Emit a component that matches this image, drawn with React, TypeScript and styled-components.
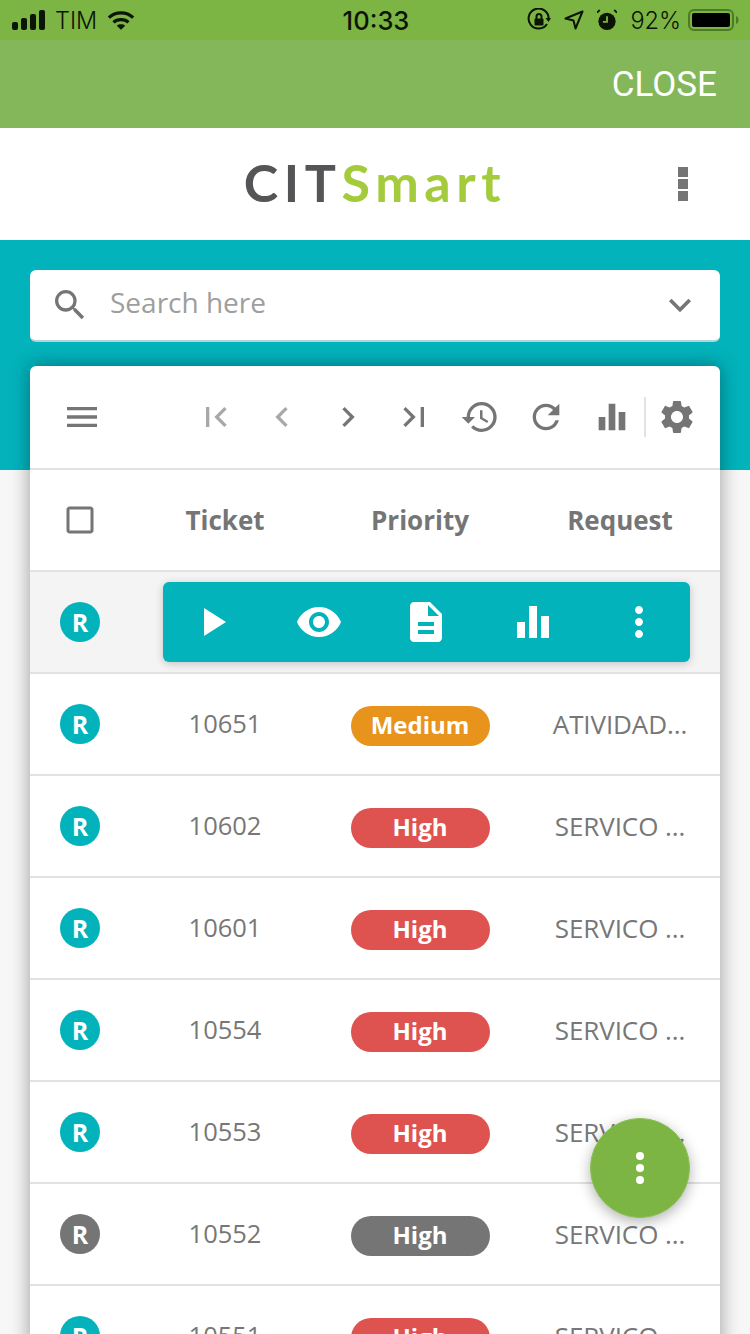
import styled, { createGlobalStyle } from "styled-components";
import {
  MdCheckBoxOutlineBlank,
  MdChevronLeft,
  MdChevronRight,
  MdDescription,
  MdEqualizer,
  MdExpandMore,
  MdFirstPage,
  MdHistory,
  MdLastPage,
  MdMenu,
  MdMoreVert,
  MdPlayArrow,
  MdRefresh,
  MdRemoveRedEye,
  MdSearch,
  MdSettings,
} from "react-icons/md";

const GlobalStyle = createGlobalStyle`
  html, body {
    margin: 0;
    padding: 0;
    background: #f7f7f7;
    overflow: hidden;
  }
  * { box-sizing: border-box; }
`;

const Page = styled.div`
  position: relative;
  width: 750px;
  height: 1334px;
  overflow: hidden;
  font-family: "Open Sans", sans-serif;
`;

const StatusBar = styled.div`
  height: 40px;
  background: #7cb544;
  display: grid;
  grid-template-columns: 1fr auto 1fr;
  align-items: center;
  padding: 0 10px 0 12px;
  color: #0c1405;
  font-family: Inter, Roboto, sans-serif;
  font-size: 23.5px;
`;

const StatusGroup = styled.div<{ $end?: boolean }>`
  display: flex;
  align-items: center;
  justify-content: ${(p) => (p.$end ? "flex-end" : "flex-start")};
  gap: ${(p) => (p.$end ? "13px" : "9px")};
  font-weight: 300;
`;

const BatteryWrap = styled.div`
  display: flex;
  margin-left: -6px;
`;

const WifiWrap = styled.div`
  display: flex;
  margin-left: 1px;
`;

const Clock = styled.div`
  font-size: 25.5px;
  font-weight: 500;
`;

const CloseBar = styled.div`
  height: 88px;
  background: #84b75a;
  display: flex;
  align-items: center;
  justify-content: flex-end;
  padding: 0 33px 0 0;
  color: #fff;
  font-family: Roboto, sans-serif;
  font-size: 35px;
`;

const LogoBar = styled.div`
  position: relative;
  height: 112px;
  background: #fff;
  display: flex;
  align-items: center;
  justify-content: center;
  padding-bottom: 4px;
`;

const Logo = styled.div`
  font-family: Lato, sans-serif;
  font-size: 52px;
  font-weight: 700;
  letter-spacing: 5.6px;
  color: #555557;
`;

const LogoAccent = styled.span`
  color: #a4cb3c;
`;

const LogoMenu = styled.div`
  position: absolute;
  right: 62px;
  top: 39px;
  display: flex;
  flex-direction: column;
  gap: 2px;
`;

const LogoDot = styled.span`
  width: 10px;
  height: 10px;
  background: #757575;
`;

const Content = styled.div`
  background: linear-gradient(#02b3bc 230px, #f7f7f7 230px);
  padding: 30px;
  height: 1094px;
`;

const SearchBox = styled.div`
  height: 72px;
  background: #fff;
  border-radius: 6px;
  border-bottom: 2px solid #b3d4d8;
  display: flex;
  align-items: center;
  padding: 0 18px 0 20px;
  color: #757575;
`;

const SearchText = styled.div`
  flex: 1;
  margin-left: 20px;
  margin-bottom: 7px;
  color: #9e9e9e;
  font-size: 28px;
`;

const Card = styled.div`
  margin-top: 24px;
  background: #fff;
  border-radius: 6px 6px 0 0;
  box-shadow: 0 0 20px rgba(0, 0, 0, 0.38);
`;

const Toolbar = styled.div`
  height: 104px;
  border-bottom: 2px solid #e2e2e2;
  display: flex;
  align-items: center;
  padding: 0 11px 0 32px;
  color: #757575;
`;

const ToolGroup = styled.div`
  margin-left: auto;
  display: flex;
  align-items: center;
`;

const ToolButton = styled.div<{ $faded?: boolean }>`
  width: 66px;
  display: flex;
  justify-content: center;
  align-items: center;
  color: ${(p) => (p.$faded ? "#a8a8a8" : "#757575")};
`;

const ToolDivider = styled.div`
  width: 2px;
  height: 40px;
  background: #e2e2e2;
  margin: 0 -1px;
`;

const GearButton = styled.div`
  width: 64px;
  display: flex;
  justify-content: center;
`;

const Row = styled.div<{ $selected?: boolean }>`
  height: 102px;
  border-bottom: 2px solid #e2e2e2;
  background: ${(p) => (p.$selected ? "#f4f4f4" : "#fff")};
  display: grid;
  grid-template-columns: 100px 190px 200px 200px;
  align-items: center;
  justify-items: center;
`;

const HeadCell = styled.div`
  font-size: 26px;
  font-weight: 700;
  color: #757575;
`;

const CheckCell = styled.div`
  display: flex;
  color: #757575;
`;

const Avatar = styled.div<{ $grey?: boolean }>`
  width: 40px;
  height: 40px;
  border-radius: 50%;
  background: ${(p) => (p.$grey ? "#757575" : "#02b3bc")};
  color: #fff;
  font-size: 25px;
  font-weight: 700;
  display: flex;
  align-items: center;
  justify-content: center;
`;

const Ticket = styled.div`
  font-size: 25.5px;
  color: #777;
  margin-bottom: 3px;
`;

const Badge = styled.div<{ $color: string }>`
  width: 139px;
  height: 40px;
  margin-top: 4px;
  padding-bottom: 3px;
  border-radius: 20px;
  background: ${(p) => p.$color};
  color: #fff;
  font-size: 24px;
  font-weight: 700;
  display: flex;
  align-items: center;
  justify-content: center;
`;

const RequestText = styled.div`
  font-size: 26px;
  letter-spacing: -0.1px;
  color: #777;
  white-space: nowrap;
`;

const ActionBar = styled.div`
  grid-column: 2 / 5;
  justify-self: start;
  width: 527px;
  height: 80px;
  margin-left: 33px;
  background: #02b3bc;
  border-radius: 6px;
  box-shadow: 0 2px 8px rgba(0, 0, 0, 0.2);
  display: grid;
  grid-template-columns: repeat(5, 106px);
  justify-content: center;
  align-items: center;
  justify-items: center;
  color: #fff;
`;

const PlayIcon = styled(MdPlayArrow)`
  margin-right: 6px;
`;

const EyeIcon = styled(MdRemoveRedEye)`
  margin-right: 4px;
`;

const DocIcon = styled(MdDescription)`
  margin-right: 2px;
`;

const Fab = styled.div`
  position: absolute;
  left: 590px;
  top: 1118px;
  width: 100px;
  height: 100px;
  border-radius: 50%;
  background: #7cb544;
  border: 1px solid #8cc152;
  box-shadow: 0 4px 14px rgba(0, 0, 0, 0.3);
  display: flex;
  flex-direction: column;
  align-items: center;
  justify-content: center;
  gap: 4px;
`;

const FabDot = styled.span`
  width: 8px;
  height: 8px;
  border-radius: 50%;
  background: #fff;
`;

const rows = [
  { id: "10651", level: "Medium", color: "#e8931b", request: "ATIVIDAD..." },
  { id: "10602", level: "High", color: "#de5350", request: "SERVICO ..." },
  { id: "10601", level: "High", color: "#de5350", request: "SERVICO ..." },
  { id: "10554", level: "High", color: "#de5350", request: "SERVICO ..." },
  { id: "10553", level: "High", color: "#de5350", request: "SERVICO ..." },
  { id: "10552", level: "High", color: "#757575", request: "SERVICO ...", grey: true },
  { id: "10551", level: "High", color: "#de5350", request: "SERVICO ..." },
];

const SignalIcon = () => (
  <svg width="34" height="20" viewBox="0 0 34 20" fill="currentColor">
    <rect x="0" y="12" width="6" height="8" rx="2" />
    <rect x="9" y="8" width="6" height="12" rx="2" />
    <rect x="18" y="4" width="6" height="16" rx="2" />
    <rect x="27" y="0" width="6" height="20" rx="2" />
  </svg>
);

const WifiIcon = () => (
  <svg width="28" height="21" viewBox="0 0 30 22" fill="none" stroke="currentColor" strokeWidth="3.4">
    <path d="M2 8 C9 1 21 1 28 8" />
    <path d="M7 13 C11 9 19 9 23 13" />
    <path d="M15 21 L10.5 16.5 C13 14.5 17 14.5 19.5 16.5 Z" fill="currentColor" stroke="none" />
  </svg>
);

const RotationIcon = () => (
  <svg width="24" height="24" viewBox="0 0 24 24" fill="none" stroke="currentColor" strokeWidth="2">
    <path d="M20 16 A10 10 0 1 1 21.6 11" />
    <path d="M18.5 10 L24 10 L21.5 14 Z" fill="currentColor" stroke="none" />
    <rect x="7.5" y="10.5" width="9" height="7" rx="1" fill="currentColor" stroke="none" />
    <path d="M9.5 11 V8.5 A2.5 2.5 0 0 1 14.5 8.5 V11" />
  </svg>
);

const LocationIcon = () => (
  <svg width="20" height="20" viewBox="0 0 20 20" fill="none" stroke="currentColor" strokeWidth="2" strokeLinejoin="round">
    <path d="M18.5 1.5 L1.5 8.5 L9.5 10.5 L11.5 18.5 Z" />
  </svg>
);

const AlarmIcon = () => (
  <svg width="20" height="22" viewBox="0 0 22 24" fill="currentColor">
    <circle cx="11" cy="13.5" r="9.5" />
    <path d="M3 1 L0 4 M19 1 L22 4" stroke="currentColor" strokeWidth="2" />
    <path d="M11 8 V14 H6.5" stroke="#7cb544" strokeWidth="2" fill="none" />
  </svg>
);

const BatteryIcon = () => (
  <svg width="52" height="24" viewBox="0 0 52 24">
    <rect x="1" y="2" width="44" height="20" rx="5" fill="none" stroke="#4d7a26" strokeWidth="2" />
    <rect x="4" y="5" width="38" height="14" rx="2" fill="#000" />
    <path d="M48 8 C50 9 50.5 10 50.5 12 C50.5 14 50 15 48 16 Z" fill="#4d7a26" />
  </svg>
);

const App = () => {
  return (
    <Page>
      <GlobalStyle />
      <StatusBar>
        <StatusGroup>
          <SignalIcon />
          <span>TIM</span>
          <WifiWrap>
            <WifiIcon />
          </WifiWrap>
        </StatusGroup>
        <Clock>10:33</Clock>
        <StatusGroup $end>
          <RotationIcon />
          <LocationIcon />
          <AlarmIcon />
          <span>92%</span>
          <BatteryWrap>
            <BatteryIcon />
          </BatteryWrap>
        </StatusGroup>
      </StatusBar>
      <CloseBar>CLOSE</CloseBar>
      <LogoBar>
        <Logo>
          CIT<LogoAccent>Smart</LogoAccent>
        </Logo>
        <LogoMenu>
          <LogoDot />
          <LogoDot />
          <LogoDot />
        </LogoMenu>
      </LogoBar>
      <Content>
        <SearchBox>
          <MdSearch size={40} />
          <SearchText>Search here</SearchText>
          <MdExpandMore size={44} />
        </SearchBox>
        <Card>
          <Toolbar>
            <MdMenu size={40} />
            <ToolGroup>
              <ToolButton $faded>
                <MdFirstPage size={40} />
              </ToolButton>
              <ToolButton $faded>
                <MdChevronLeft size={40} />
              </ToolButton>
              <ToolButton>
                <MdChevronRight size={40} />
              </ToolButton>
              <ToolButton>
                <MdLastPage size={40} />
              </ToolButton>
              <ToolButton>
                <MdHistory size={40} />
              </ToolButton>
              <ToolButton>
                <MdRefresh size={40} />
              </ToolButton>
              <ToolButton>
                <MdEqualizer size={40} />
              </ToolButton>
              <ToolDivider />
              <GearButton>
                <MdSettings size={40} />
              </GearButton>
            </ToolGroup>
          </Toolbar>
          <Row>
            <CheckCell>
              <MdCheckBoxOutlineBlank size={36} />
            </CheckCell>
            <HeadCell>Ticket</HeadCell>
            <HeadCell>Priority</HeadCell>
            <HeadCell>Request</HeadCell>
          </Row>
          <Row $selected>
            <Avatar>R</Avatar>
            <ActionBar>
              <PlayIcon size={48} />
              <EyeIcon size={48} />
              <DocIcon size={48} />
              <MdEqualizer size={48} />
              <MdMoreVert size={48} />
            </ActionBar>
          </Row>
          {rows.map((row) => (
            <Row key={row.id}>
              <Avatar $grey={row.grey}>R</Avatar>
              <Ticket>{row.id}</Ticket>
              <Badge $color={row.color}>{row.level}</Badge>
              <RequestText>{row.request}</RequestText>
            </Row>
          ))}
        </Card>
      </Content>
      <Fab>
        <FabDot />
        <FabDot />
        <FabDot />
      </Fab>
    </Page>
  );
};

export default App;
